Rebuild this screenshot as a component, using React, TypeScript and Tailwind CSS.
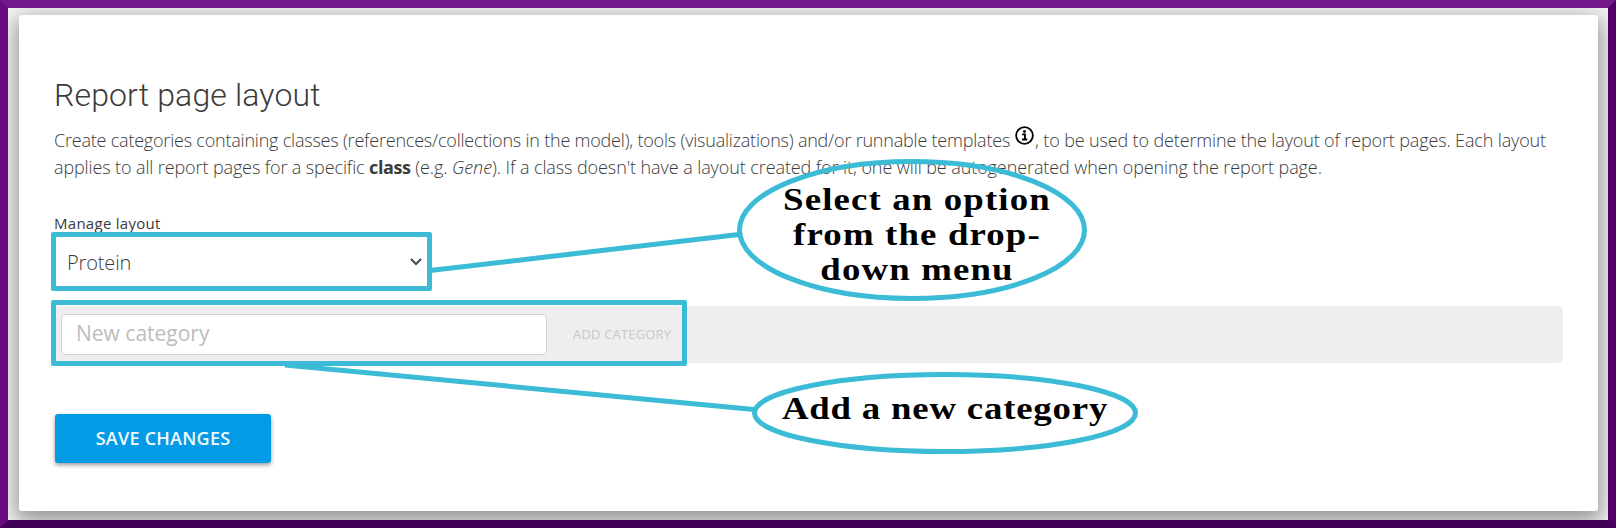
const ACCENT = "#3bbbd5";

function InfoIcon() {
  return (
    <svg viewBox="0 0 20 20" className="-mt-[3px] mr-[1px] ml-[5px] inline-block h-[19px] w-[19px] align-[2px]" fill="none">
      <circle cx="10" cy="10" r="8.8" stroke="#000" strokeWidth="1.9" />
      <circle cx="10" cy="5.800" r="1.500" fill="#000" />
      <path d="M7.500 8.800h3v5.400M7.300 14.200h5.600" stroke="#000" strokeWidth="2" />
    </svg>
  );
}

function Connectors() {
  return (
    <svg className="pointer-events-none absolute inset-0" width="1616" height="528" fill="none" stroke={ACCENT} strokeWidth="5">
      <path d="M430 270.500L739 234.500" />
      <path d="M285 365L754 409.500" />
      <ellipse cx="912" cy="230" rx="172.500" ry="68.500" />
      <ellipse cx="945" cy="413" rx="190.500" ry="38.500" />
    </svg>
  );
}

export default function App() {
  return (
    <div className="relative h-[528px] w-[1616px] overflow-hidden border-8 border-t-[#74198c] border-r-[#4f0066] border-b-[#420058] border-l-[#690a80] bg-[#f5f5f5] font-['Open_Sans',sans-serif]">
      <main className="mt-[7px] ml-[11px] flex h-[496px] w-[1579px] flex-col items-start rounded-[3px] bg-white pr-[35px] pl-[35px] shadow-[0_8px_17px_2px_rgba(0,0,0,0.24),0_6px_30px_5px_rgba(0,0,0,0.2)]">
        <h1 className="mt-[61px] h-[38px] font-['Roboto',sans-serif] text-[32px] leading-[38px] font-light tracking-[0.14px] text-[#3b3b3b]">
          Report page layout
        </h1>
        <p className="mt-[13px] h-[54px] text-[18px] leading-[27px] font-light whitespace-nowrap text-[#3b3b3b]">
          <span className="block h-[27px]">
            <span className="tracking-[-0.21px]">
              Create categories containing classes (references/collections in the model), tools (visualizations) and/or runnable templates
            </span>
            <InfoIcon />
            <span className="tracking-[-0.14px]">, to be used to determine the layout of report pages. Each layout</span>
          </span>
          <span className="block h-[27px]">
            <span className="tracking-[-0.12px]">applies to all report pages for a specific </span>
            <b className="font-bold tracking-[-0.4px]">class</b>
            <span className="tracking-[-0.09px]">
              {" "}(e.g. <i>Gene</i>). If a class doesn't have a layout created for it, one will be autogenerated when opening the report page.
            </span>
          </span>
        </p>
        <label className="mt-[32px] h-[20px] text-[15px] leading-[20px] tracking-[0.28px] text-[#3b3b3b]">Manage layout</label>
        <div className="mt-[4px] flex h-[52px] w-[375px] items-center justify-between pr-[7px] pl-[13px]">
          <span className="text-[20px] font-light tracking-[-0.15px] text-[#3b3b3b]">Protein</span>
          <svg viewBox="0 0 12 8" className="mb-[2px] h-2 w-3" fill="none" stroke="#4a4a4a" strokeWidth="2">
            <path d="M1 1l5 5 5-5" />
          </svg>
        </div>
        <div className="mt-[17px] flex h-[57px] w-[1509px] items-center rounded-[5px] bg-[#eeeeee] pl-[7px]">
          <div className="flex h-[41px] w-[486px] items-center rounded-[4px] border border-[#d2d2d2] bg-white pb-[2px] pl-[14px] text-[21px] text-[#bdbdbd]">
            New category
          </div>
          <span className="ml-[26px] text-[13px] tracking-[0.18px] text-[#c8c8c8]">ADD CATEGORY</span>
        </div>
        <button className="mt-[51px] ml-px h-[49px] w-[216px] rounded-[3px] bg-[#039be5] text-[18px] font-semibold tracking-[0.25px] text-[#f2faff] shadow-[0_2px_4px_rgba(0,0,0,0.4)]">
          SAVE CHANGES
        </button>
      </main>
      <div className="pointer-events-none absolute -top-2 -left-2 h-[528px] w-[1616px]">
        <Connectors />
        <div className="absolute top-[232px] left-[51px] h-[59px] w-[381px] rounded-[2px] border-5 border-[#3bbbd5]" />
        <div className="absolute top-[300px] left-[51px] h-[66px] w-[636px] rounded-[2px] border-5 border-[#3bbbd5]" />
        <div className="absolute top-[182px] left-[767px] w-[300px] scale-x-[1.15] text-center font-['Liberation_Serif',serif] text-[32px] leading-[35px] font-bold tracking-[1px] text-black">
          Select an option<br />from the drop-<br />down menu
        </div>
        <div className="absolute top-[391px] left-[765px] w-[360px] scale-x-[1.15] text-center font-['Liberation_Serif',serif] text-[32px] leading-[35px] font-bold tracking-[0.7px] text-black">
          Add a new category
        </div>
      </div>
    </div>
  );
}
